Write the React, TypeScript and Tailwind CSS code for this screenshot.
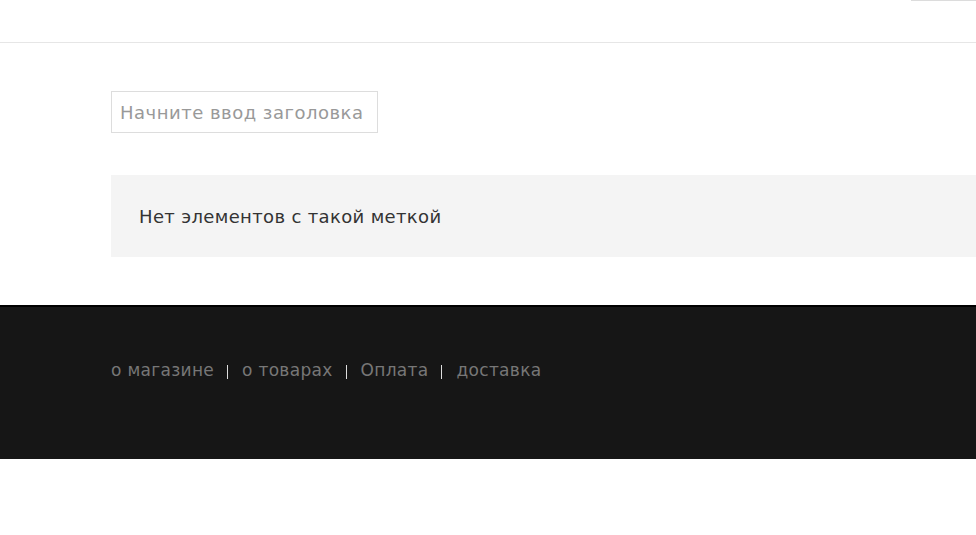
import React from 'react';

const links = ['о магазине', 'о товарах', 'Оплата', 'доставка'];

export default function App() {
  return (
    <div className="min-h-[535px] bg-white font-['DejaVu_Sans',Verdana,sans-serif]">
      {/* Top bar */}
      <header className="h-[43px] border-b border-[#e6e6e6] flex justify-end">
        <div className="w-[65px] h-px bg-[#dcdcdc]" />
      </header>

      {/* Tag search */}
      <main className="pl-[111px] pt-[48px] pb-[48px]">
        <input
          type="text"
          placeholder="Начните ввод заголовка"
          className="block w-[267px] h-[42px] px-[8px] border border-[#dddddd] text-[18px] tracking-[0.5px] text-[#333] placeholder:text-[#999] outline-none"
        />
        <div className="mt-[42px] h-[82px] bg-[#f4f4f4] flex items-center pl-[28px]">
          <p className="text-[18px] tracking-[0.35px] text-[#333]">Нет элементов с такой меткой</p>
        </div>
      </main>

      {/* Footer */}
      <footer className="h-[154px] bg-[#161616] border-t-2 border-black pl-[111px] pt-[51px]">
        <nav className="flex items-center text-[17px] tracking-[0.3px] text-[#777]">
          {links.map((l, i) => (
            <React.Fragment key={l}>
              {i > 0 && <span className="ml-[13px] mr-[14px] mt-[3px] w-px h-[14px] bg-[#dddddd]" />}
              <a href="#" className="hover:text-white">{l}</a>
            </React.Fragment>
          ))}
        </nav>
      </footer>
    </div>
  );
}
